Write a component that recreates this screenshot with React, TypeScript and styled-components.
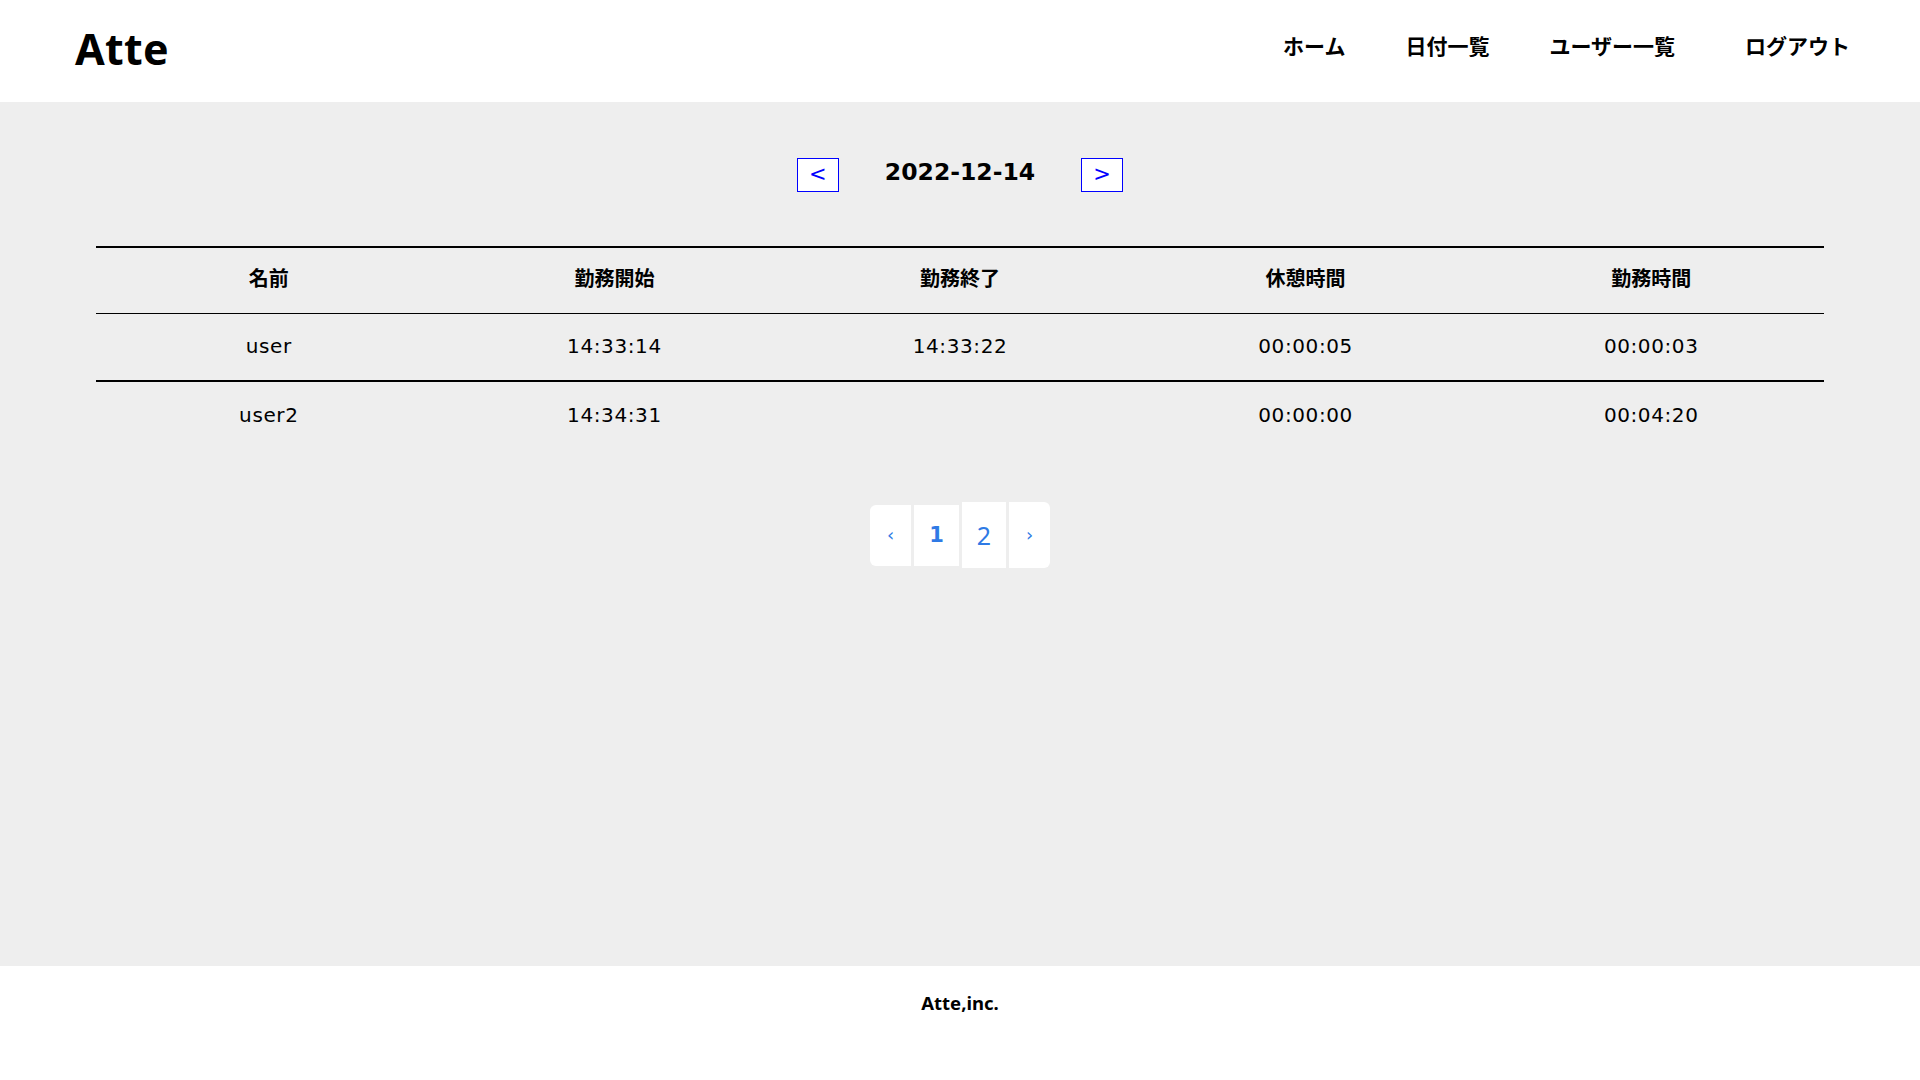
import React from "react";
import styled, { createGlobalStyle } from "styled-components";

const GlobalStyle = createGlobalStyle`
  html, body {
    margin: 0;
    padding: 0;
    background: #ffffff;
    color: #000000;
    font-family: "DejaVu Sans", "Noto Sans CJK JP", sans-serif;
  }
  * { box-sizing: border-box; }
`;

const Header = styled.header`
  height: 102px;
  background: #ffffff;
  display: flex;
  align-items: center;
  justify-content: space-between;
  padding: 0 70px 6px 75px;
`;

const Logo = styled.h1`
  margin: 0;
  font-family: "Noto Sans", "DejaVu Sans", sans-serif;
  font-weight: 700;
  font-size: 43px;
  line-height: 1;
  letter-spacing: 0.3px;
`;

const Nav = styled.nav`
  display: flex;
  align-items: center;
  gap: 60px;
  margin-bottom: 6px;
`;

const NavItem = styled.a<{ $extra?: number }>`
  font-family: "Noto Sans CJK JP", sans-serif;
  font-weight: 700;
  font-size: 21px;
  color: #000000;
  text-decoration: none;
  margin-left: ${(p) => p.$extra ?? 0}px;
`;

const Main = styled.main`
  background: #eeeeee;
  min-height: 864px;
  padding-top: 56px;
  display: flex;
  flex-direction: column;
  align-items: center;
`;

const DateNav = styled.div`
  display: flex;
  align-items: center;
  gap: 46px;
  height: 34px;
`;

const DateButton = styled.button`
  width: 42px;
  height: 34px;
  border: 1px solid #0000ff;
  background: #ffffff;
  color: #0000ff;
  font-family: "DejaVu Sans", sans-serif;
  font-size: 21px;
  line-height: 1;
  padding: 0 0 2px;
  display: flex;
  align-items: center;
  justify-content: center;
  cursor: pointer;
`;

const DateText = styled.span`
  font-family: "DejaVu Sans", sans-serif;
  font-weight: 700;
  font-size: 23.5px;
  line-height: 34px;
  margin-top: -6px;
`;

const Table = styled.table`
  width: 90%;
  margin-top: 54px;
  border-collapse: collapse;
  border-top: 2px solid #000000;
  table-layout: fixed;
`;

const HeadCell = styled.th`
  height: 66px;
  font-family: "Noto Sans CJK JP", sans-serif;
  font-weight: 700;
  font-size: 20px;
  text-align: center;
  border-bottom: 1px solid #000000;
  padding: 0 0 6px;
`;

const Row = styled.tr<{ $divider?: boolean }>`
  border-bottom: ${(p) => (p.$divider ? "2px solid #000000" : "none")};
`;

const Cell = styled.td`
  height: 68px;
  font-family: "DejaVu Sans", "Noto Sans CJK JP", sans-serif;
  font-size: 20px;
  letter-spacing: 0.6px;
  text-align: center;
  padding: 0 0 1px;
`;

const Pagination = styled.ul`
  list-style: none;
  margin: 53px 0 0;
  padding: 0;
  display: flex;
  align-items: center;
  gap: 3px;
`;

const PageItem = styled.li<{ $tall?: boolean; $w: number; $side?: "left" | "right" }>`
  width: ${(p) => p.$w}px;
  height: ${(p) => (p.$tall ? 66 : 61)}px;
  background: #ffffff;
  display: flex;
  align-items: center;
  justify-content: center;
  color: #2f7ae5;
  border-radius: ${(p) =>
    p.$side === "left" ? "6px 0 0 6px" : p.$side === "right" ? "0 6px 6px 0" : "0"};
`;

const PageText = styled.span<{ $size: number; $bold?: boolean; $font?: string }>`
  font-family: ${(p) => p.$font ?? `"DejaVu Sans", sans-serif`};
  font-size: ${(p) => p.$size}px;
  font-weight: ${(p) => (p.$bold ? 700 : 400)};
  line-height: 1;
`;

const Footer = styled.footer`
  height: 114px;
  background: #ffffff;
  display: flex;
  justify-content: center;
  padding-top: 24px;
`;

const FooterText = styled.small`
  font-family: "Noto Sans", "DejaVu Sans", sans-serif;
  font-weight: 700;
  font-size: 18.5px;
  line-height: 26px;
`;

const rows = [
  { name: "user", start: "14:33:14", end: "14:33:22", rest: "00:00:05", work: "00:00:03" },
  { name: "user2", start: "14:34:31", end: "", rest: "00:00:00", work: "00:04:20" },
];

export default function App() {
  return (
    <>
      <GlobalStyle />
      <Header>
        <Logo>Atte</Logo>
        <Nav>
          <NavItem href="#">ホーム</NavItem>
          <NavItem href="#">日付一覧</NavItem>
          <NavItem href="#">ユーザー一覧</NavItem>
          <NavItem href="#" $extra={10}>ログアウト</NavItem>
        </Nav>
      </Header>
      <Main>
        <DateNav>
          <DateButton>&lt;</DateButton>
          <DateText>2022-12-14</DateText>
          <DateButton>&gt;</DateButton>
        </DateNav>
        <Table>
          <thead>
            <tr>
              <HeadCell>名前</HeadCell>
              <HeadCell>勤務開始</HeadCell>
              <HeadCell>勤務終了</HeadCell>
              <HeadCell>休憩時間</HeadCell>
              <HeadCell>勤務時間</HeadCell>
            </tr>
          </thead>
          <tbody>
            {rows.map((r, i) => (
              <Row key={r.name} $divider={i < rows.length - 1}>
                <Cell>{r.name}</Cell>
                <Cell>{r.start}</Cell>
                <Cell>{r.end}</Cell>
                <Cell>{r.rest}</Cell>
                <Cell>{r.work}</Cell>
              </Row>
            ))}
          </tbody>
        </Table>
        <Pagination>
          <PageItem $w={41} $side="left">
            <PageText $size={18}>‹</PageText>
          </PageItem>
          <PageItem $w={45}>
            <PageText $size={21} $bold>1</PageText>
          </PageItem>
          <PageItem $w={44} $tall>
            <PageText $size={25} $font={`"Noto Sans", sans-serif`}>2</PageText>
          </PageItem>
          <PageItem $w={41} $tall $side="right">
            <PageText $size={18}>›</PageText>
          </PageItem>
        </Pagination>
      </Main>
      <Footer>
        <FooterText>Atte,inc.</FooterText>
      </Footer>
    </>
  );
}
